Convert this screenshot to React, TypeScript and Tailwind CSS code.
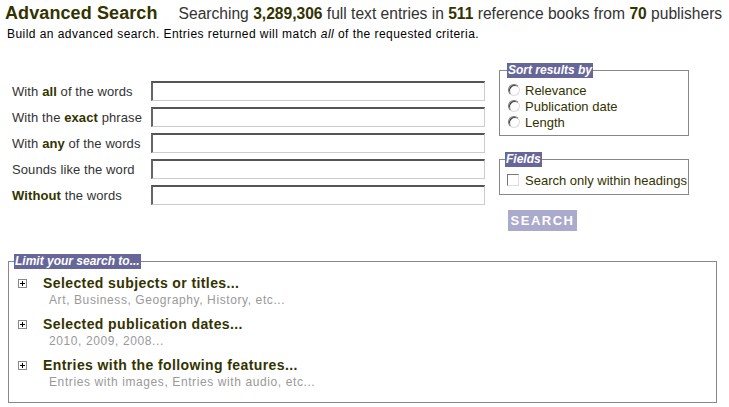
import React from "react";

const F = { fontFamily: '"Liberation Sans", Arial, sans-serif' };

function Radio() {
  return (
    <span className="inline-block w-[12px] h-[12px] rounded-full border border-t-[#777] border-l-[#777] border-b-[#ddd] border-r-[#ddd] bg-white shadow-[inset_1px_1px_0_#444] shrink-0" />
  );
}

function Plus() {
  return (
    <span className="relative block w-[9px] h-[9px] border border-[#888] bg-white shrink-0">
      <span className="absolute left-[1px] top-[3px] w-[5px] h-[1px] bg-black" />
      <span className="absolute left-[3px] top-[1px] w-[1px] h-[5px] bg-black" />
    </span>
  );
}

function Field({ label }: { label: React.ReactNode }) {
  return (
    <div className="flex items-center h-[26px]">
      <div className="w-[139px] text-[13px] text-[#333] tracking-[0.1px] whitespace-nowrap">{label}</div>
      <div className="w-[334px] h-[20px] bg-white border-t-2 border-l-2 border-b border-r border-t-[#555] border-l-[#666] border-b-[#ccc] border-r-[#ccc]" />
    </div>
  );
}

function Item({ title, sub }: { title: string; sub: string }) {
  return (
    <div className="flex h-[41px]">
      <div className="w-[25px] pt-[4px] flex items-start">
        <Plus />
      </div>
      <div>
        <div className="text-[14px] font-bold text-[#333300] leading-[17px] tracking-[0.4px] whitespace-nowrap">{title}</div>
        <div className="text-[12px] text-[#999] leading-[17px] pl-[6px] tracking-[0.6px] whitespace-nowrap">{sub}</div>
      </div>
    </div>
  );
}

export default function App() {
  return (
    <div style={F} className="w-[729px] h-[407px] bg-white overflow-hidden text-black">
      <div className="pl-[5px] pt-[2px] flex items-baseline whitespace-nowrap">
        <span className="text-[18px] font-bold text-[#333300] leading-[22px] tracking-[0.1px] shrink-0">Advanced Search</span>
        <span className="ml-[21px] text-[15.6px] text-[#333] shrink-0">
          Searching <b className="text-[#333300]">3,289,306</b> full text entries in <b className="text-[#333300]">511</b> reference books from <b className="text-[#333300]">70</b> publishers
        </span>
      </div>
      <div className="pl-[7px] text-[12px] leading-[15px] mt-[2px] tracking-[0.45px] whitespace-nowrap">
        Build an advanced search. Entries returned will match <i>all</i> of the requested criteria.
      </div>

      <div className="flex mt-[10px]">
        <div className="pl-[12px] pt-[26px] w-[499px]">
          <Field label={<>With <b className="text-[#333300]">all</b> of the words</>} />
          <Field label={<>With the <b className="text-[#333300]">exact</b> phrase</>} />
          <Field label={<>With <b className="text-[#333300]">any</b> of the words</>} />
          <Field label={<>Sounds like the word</>} />
          <Field label={<><b className="text-[#333300]">Without</b> the words</>} />
        </div>
        <div className="w-[190px] pt-[11px]">
          <fieldset className="border border-[#888] h-[73px] pl-[8px] pt-[4px]">
            <legend className="bg-[#666699] text-white italic font-bold text-[12px] leading-[15px] px-[1px] ml-[-1px]">Sort results by</legend>
            <div className="flex items-center gap-[5px] h-[16px] text-[13px] text-[#333300]"><Radio /> Relevance</div>
            <div className="flex items-center gap-[5px] h-[16px] text-[13px] text-[#333300]"><Radio /> Publication date</div>
            <div className="flex items-center gap-[5px] h-[16px] text-[13px] text-[#333300]"><Radio /> Length</div>
          </fieldset>
          <fieldset className="border border-[#888] mt-[16px] h-[43px] pl-[7px] pt-[4px]">
            <legend className="bg-[#666699] text-white italic font-bold text-[12px] leading-[15px] px-[1px] ml-[-2px]">Fields</legend>
            <div className="flex items-center gap-[6px] h-[18px] text-[13px] text-[#333300] whitespace-nowrap">
              <span className="inline-block w-[12px] h-[12px] border border-t-[#777] border-l-[#777] border-b-[#ddd] border-r-[#ddd] bg-white shrink-0" />
              Search only within headings
            </div>
          </fieldset>
          <div className="ml-[9px] mt-[15px] w-[69px] h-[21px] bg-[#aaaacc] text-white font-bold text-[13px] tracking-[1.5px] flex items-center justify-center">
            SEARCH
          </div>
        </div>
      </div>

      <fieldset className="ml-[8px] mt-[23px] w-[709px] h-[149px] border border-[#888] pl-[9px] pt-[6px]">
        <legend className="bg-[#666699] text-white italic font-bold text-[12px] leading-[15px] px-[1px] ml-[-4px]">Limit your search to...</legend>
        <Item title="Selected subjects or titles..." sub="Art, Business, Geography, History, etc..." />
        <Item title="Selected publication dates..." sub="2010, 2009, 2008..." />
        <Item title="Entries with the following features..." sub="Entries with images, Entries with audio, etc..." />
      </fieldset>
    </div>
  );
}
